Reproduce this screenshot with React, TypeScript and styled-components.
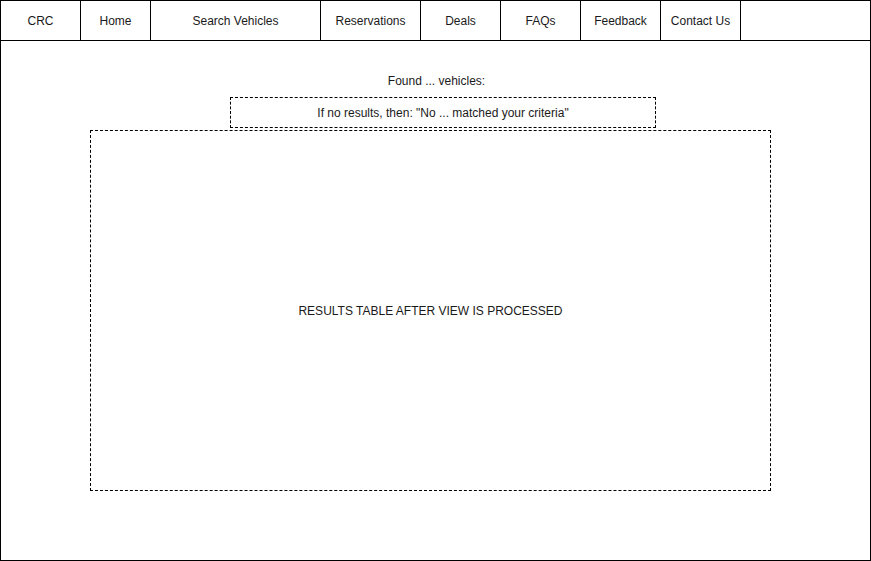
import React from "react";
import styled, { createGlobalStyle } from "styled-components";

const GlobalStyle = createGlobalStyle`
  html, body {
    margin: 0;
    padding: 0;
    background: #ffffff;
  }
  body {
    font-family: "Liberation Sans", Arial, Helvetica, sans-serif;
    font-size: 12px;
    color: #1a1a1a;
  }
`;

const Frame = styled.div`
  box-sizing: border-box;
  width: 871px;
  height: 561px;
  border: 1px solid #000;
  display: flex;
  flex-direction: column;
`;

const NavBar = styled.nav`
  box-sizing: border-box;
  height: 40px;
  border-bottom: 1px solid #000;
  display: flex;
  flex-shrink: 0;
`;

const NavCell = styled.div<{ $w: number }>`
  box-sizing: border-box;
  width: ${(p) => p.$w}px;
  height: 100%;
  border-right: 1px solid #000;
  display: flex;
  align-items: center;
  justify-content: center;
  line-height: 14px;
  white-space: nowrap;
`;

const Main = styled.main`
  display: flex;
  flex-direction: column;
  flex: 1;
`;

const FoundText = styled.div`
  margin-top: 33px;
  height: 14px;
  line-height: 14px;
  text-align: center;
  padding-left: 2px;
`;

const DashedBox = styled.div<{ $left: number; $top: number; $w: number; $h: number }>`
  box-sizing: border-box;
  margin-left: ${(p) => p.$left}px;
  margin-top: ${(p) => p.$top}px;
  width: ${(p) => p.$w}px;
  height: ${(p) => p.$h}px;
  border: 1px dashed #000;
  display: flex;
  align-items: center;
  justify-content: center;
  line-height: 14px;
  white-space: nowrap;
`;

const navItems: { label: string; w: number }[] = [
  { label: "CRC", w: 80 },
  { label: "Home", w: 70 },
  { label: "Search Vehicles", w: 170 },
  { label: "Reservations", w: 100 },
  { label: "Deals", w: 80 },
  { label: "FAQs", w: 80 },
  { label: "Feedback", w: 80 },
  { label: "Contact Us", w: 80 },
];

export default function App() {
  return (
    <>
      <GlobalStyle />
      <Frame>
        <NavBar>
          {navItems.map((item) => (
            <NavCell key={item.label} $w={item.w}>
              {item.label}
            </NavCell>
          ))}
        </NavBar>
        <Main>
          <FoundText>Found ... vehicles:</FoundText>
          <DashedBox $left={229} $top={9} $w={426} $h={31}>
            If no results, then: "No ... matched your criteria"
          </DashedBox>
          <DashedBox $left={89} $top={2} $w={681} $h={361}>
            RESULTS TABLE AFTER VIEW IS PROCESSED
          </DashedBox>
        </Main>
      </Frame>
    </>
  );
}
